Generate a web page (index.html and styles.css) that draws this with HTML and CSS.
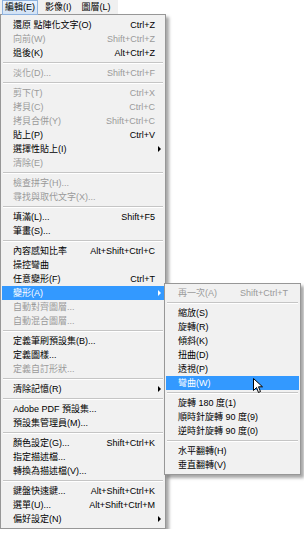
FILE: index.html
```html
<!DOCTYPE html>
<html lang="zh-Hant">
<head>
    <meta charset="UTF-8">
    <meta name="viewport" content="width=device-width, initial-scale=1.0">
    <title>編輯選單</title>
    <link rel="stylesheet" href="styles.css">
</head>
<body>
    <div class="menubar">
        <span class="tab active">編輯(E)</span>
        <span class="tab">影像(I)</span>
        <span class="tab">圖層(L)</span>
    </div>

    <!-- 編輯選單 -->
    <ul class="menu main-menu">
        <li class="item"><span>還原 點陣化文字(O)</span><span class="key">Ctrl+Z</span></li>
        <li class="item off"><span>向前(W)</span><span class="key">Shift+Ctrl+Z</span></li>
        <li class="item"><span>退後(K)</span><span class="key">Alt+Ctrl+Z</span></li>
        <li class="sep"></li>
        <li class="item off"><span>淡化(D)...</span><span class="key">Shift+Ctrl+F</span></li>
        <li class="sep"></li>
        <li class="item off"><span>剪下(T)</span><span class="key">Ctrl+X</span></li>
        <li class="item off"><span>拷貝(C)</span><span class="key">Ctrl+C</span></li>
        <li class="item off"><span>拷貝合併(Y)</span><span class="key">Shift+Ctrl+C</span></li>
        <li class="item"><span>貼上(P)</span><span class="key">Ctrl+V</span></li>
        <li class="item"><span>選擇性貼上(I)</span><span class="key"></span><span class="arrow"></span></li>
        <li class="item off"><span>清除(E)</span></li>
        <li class="sep"></li>
        <li class="item off"><span>檢查拼字(H)...</span></li>
        <li class="item off"><span>尋找與取代文字(X)...</span></li>
        <li class="sep"></li>
        <li class="item"><span>填滿(L)...</span><span class="key">Shift+F5</span></li>
        <li class="item"><span>筆畫(S)...</span></li>
        <li class="sep"></li>
        <li class="item"><span>內容感知比率</span><span class="key">Alt+Shift+Ctrl+C</span></li>
        <li class="item"><span>操控彎曲</span></li>
        <li class="item"><span>任意變形(F)</span><span class="key">Ctrl+T</span></li>
        <li class="item hot">
            <span>變形(A)</span><span class="key"></span><span class="arrow"></span>

            <!-- 變形子選單 -->
            <ul class="menu submenu">
                <li class="item off"><span>再一次(A)</span><span class="key">Shift+Ctrl+T</span></li>
                <li class="sep"></li>
                <li class="item"><span>縮放(S)</span></li>
                <li class="item"><span>旋轉(R)</span></li>
                <li class="item"><span>傾斜(K)</span></li>
                <li class="item"><span>扭曲(D)</span></li>
                <li class="item"><span>透視(P)</span></li>
                <li class="item hot">
                    <span>彎曲(W)</span>
                    <svg class="cursor" width="11" height="16" viewBox="0 0 11 16">
                        <path d="M0.5 0.5 L0.5 12.5 L3.5 9.5 L5.5 14.5 L7.5 13.5 L5.5 8.8 L9.5 8.8 Z" fill="#fff" stroke="#000" stroke-width="1" stroke-linejoin="miter"/>
                    </svg>
                </li>
                <li class="sep"></li>
                <li class="item"><span>旋轉 180 度(1)</span></li>
                <li class="item"><span>順時針旋轉 90 度(9)</span></li>
                <li class="item"><span>逆時針旋轉 90 度(0)</span></li>
                <li class="sep"></li>
                <li class="item"><span>水平翻轉(H)</span></li>
                <li class="item"><span>垂直翻轉(V)</span></li>
            </ul>
        </li>
        <li class="item off"><span>自動對齊圖層...</span></li>
        <li class="item off"><span>自動混合圖層...</span></li>
        <li class="sep"></li>
        <li class="item"><span>定義筆刷預設集(B)...</span></li>
        <li class="item"><span>定義圖樣...</span></li>
        <li class="item off"><span>定義自訂形狀...</span></li>
        <li class="sep"></li>
        <li class="item"><span>清除記憶(R)</span><span class="key"></span><span class="arrow"></span></li>
        <li class="sep"></li>
        <li class="item"><span>Adobe PDF 預設集...</span></li>
        <li class="item"><span>預設集管理員(M)...</span></li>
        <li class="sep"></li>
        <li class="item"><span>顏色設定(G)...</span><span class="key">Shift+Ctrl+K</span></li>
        <li class="item"><span>指定描述檔...</span></li>
        <li class="item"><span>轉換為描述檔(V)...</span></li>
        <li class="sep"></li>
        <li class="item"><span>鍵盤快速鍵...</span><span class="key">Alt+Shift+Ctrl+K</span></li>
        <li class="item"><span>選單(U)...</span><span class="key">Alt+Shift+Ctrl+M</span></li>
        <li class="item"><span>偏好設定(N)</span><span class="key"></span><span class="arrow"></span></li>
    </ul>
</body>
</html>
```

FILE: styles.css
```css
body {
    margin: 0;
    padding: 0;
    background-color: #fff;
    font-family: "Liberation Sans", "Noto Sans CJK TC", sans-serif;
    font-size: 9px;
    color: #000;
}

.menubar {
    display: flex;
    gap: 4px;
    width: fit-content;
    height: 14px;
    padding: 0 4px 0 2px;
    background-color: #f0f0f0;
}

.tab {
    flex: none;
    height: 13px;
    line-height: 13px;
    padding: 0 2px;
    border: 1px solid transparent;
    white-space: nowrap;
}

.tab.active {
    background: linear-gradient(#eaf2fc, #d2e2f5);
    border-color: #90b3de; /* 目前開啟的選單 */
}

.menu {
    list-style: none;
    margin: 0;
    background-color: #f1f1f1;
    border: 1px solid #979797;
    box-shadow: 3px 3px 3px rgba(0, 0, 0, 0.35);
}

.main-menu {
    width: 162px;
    padding: 3px 1px 2px;
}

.item {
    position: relative;
    display: grid;
    grid-template-columns: 1fr auto 9px;
    align-items: center;
    height: 14px;
    line-height: 14px;
    padding-left: 11px;
    white-space: nowrap;
}

.item.off {
    color: #9a9a9a;
}

.item.hot {
    background-color: #3399ff;
    color: #fff;
}

.arrow {
    justify-self: center;
    width: 0;
    height: 0;
    border-left: 3px solid #000;
    border-top: 3px solid transparent;
    border-bottom: 3px solid transparent;
}

.hot > .arrow {
    border-left-color: #fff;
}

.sep {
    height: 0;
    margin: 2px 1px;
    border-top: 1px solid #c5c5c5;
    border-bottom: 1px solid #fff;
}

.submenu {
    position: absolute;
    left: 100%;
    top: -3px;
    width: 133px;
    padding: 2px 1px;
    color: #000;
}

.submenu .item {
    grid-template-columns: 1fr auto;
    padding-left: 12px;
    padding-right: 11px;
}

.submenu .item.off {
    color: #9a9a9a;
}

.submenu .item.hot {
    color: #fff;
}

.cursor {
    position: absolute;
    left: 87px;
    top: 2px;
}
```
